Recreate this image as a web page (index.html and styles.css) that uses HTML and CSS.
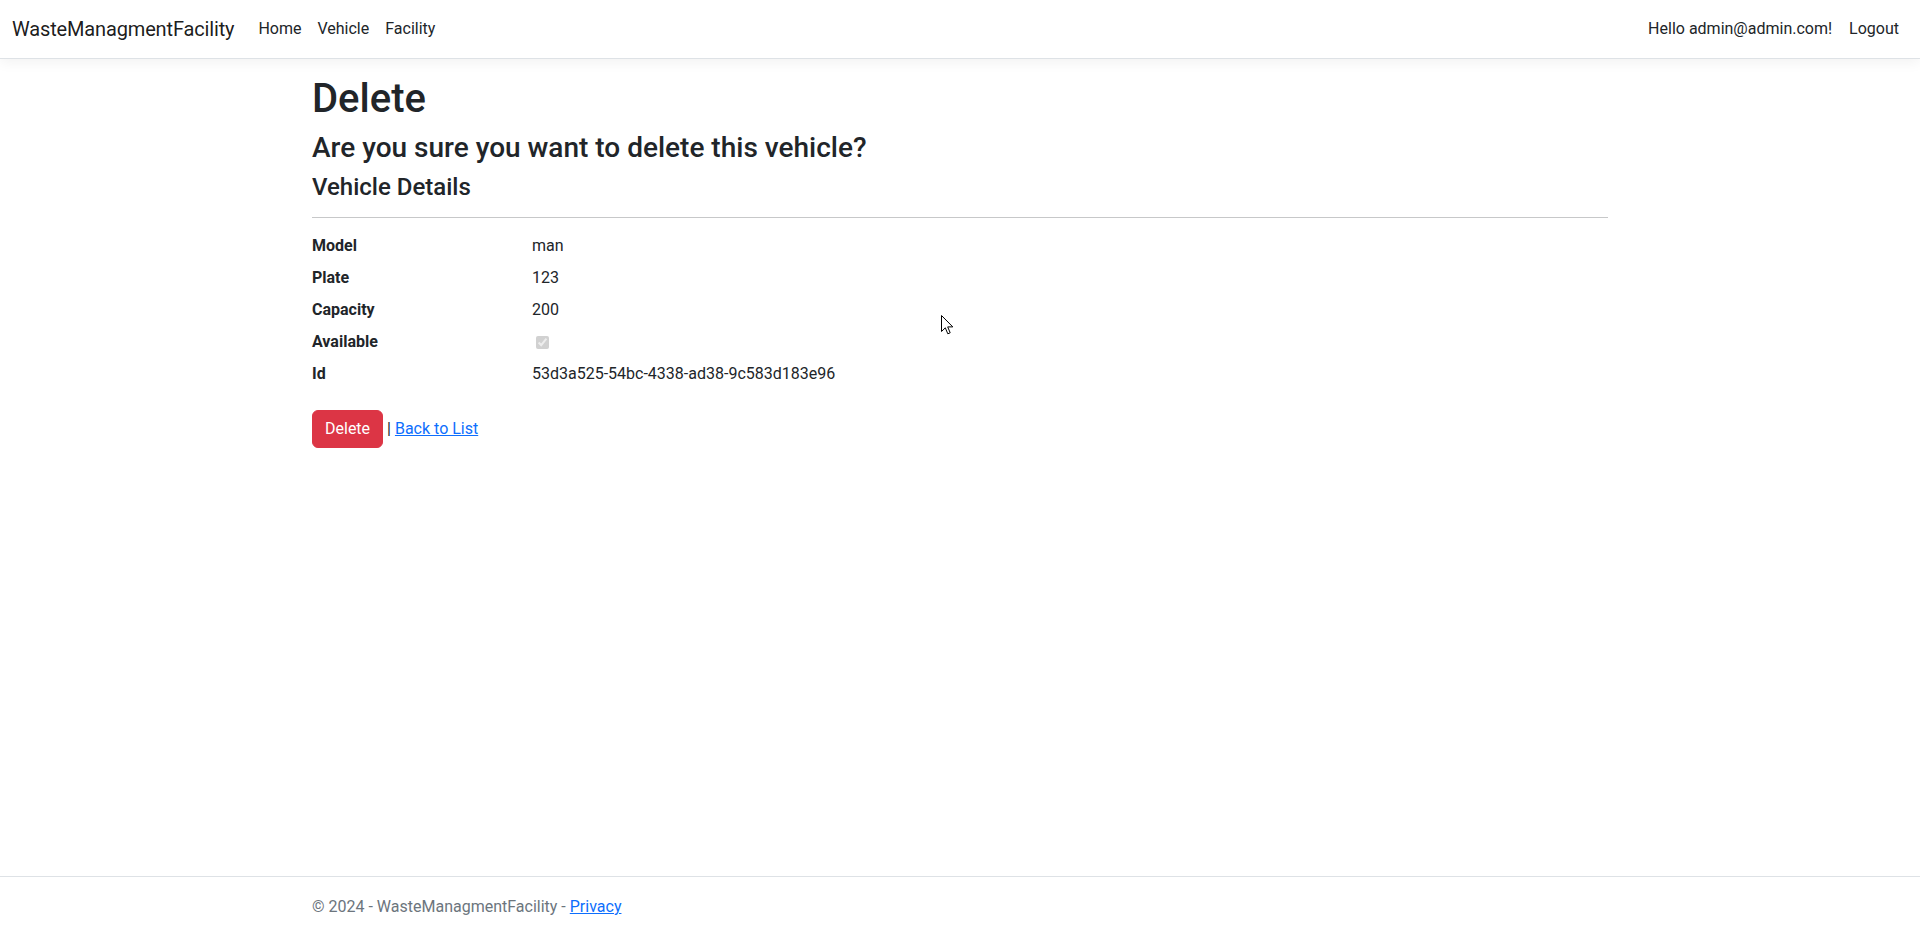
FILE: index.html
```html
<!DOCTYPE html>
<html lang="en">
<head>
<meta charset="utf-8">
<title>Delete - WasteManagmentFacility</title>
<link rel="stylesheet" href="styles.css">
</head>
<body>
<header>
  <nav class="navbar">
    <div class="navbar-inner">
      <a class="brand" href="#">WasteManagmentFacility</a>
      <ul class="nav-list">
        <li><a class="nav-link" href="#">Home</a></li>
        <li><a class="nav-link" href="#">Vehicle</a></li>
        <li><a class="nav-link" href="#">Facility</a></li>
      </ul>
      <ul class="nav-list nav-right">
        <li><a class="nav-link" href="#">Hello admin@admin.com!</a></li>
        <li><button class="nav-link nav-button" type="button">Logout</button></li>
      </ul>
    </div>
  </nav>
</header>
<div class="container main">
  <h1 class="title">Delete</h1>
  <h3 class="question">Are you sure you want to delete this vehicle?</h3>
  <div>
    <h4 class="subtitle">Vehicle Details</h4>
    <hr class="divider">
    <dl class="details">
      <dt>Model</dt><dd>man</dd>
      <dt>Plate</dt><dd>123</dd>
      <dt>Capacity</dt><dd>200</dd>
      <dt>Available</dt><dd><input class="check-box" type="checkbox" checked disabled></dd>
      <dt>Id</dt><dd>53d3a525-54bc-4338-ad38-9c583d183e96</dd>
    </dl>
    <form class="actions">
      <button type="button" class="btn-danger">Delete</button> | <a href="#" class="link">Back to List</a>
    </form>
  </div>
</div>
<footer class="footer">
  <div class="container">&copy; 2024 - WasteManagmentFacility - <a href="#" class="link">Privacy</a></div>
</footer>
<svg class="cursor" width="13" height="21" viewBox="0 0 13 21">
  <path d="M0.5 0.5 L0.5 16.5 L4.3 12.8 L6.8 18.8 L9.2 17.8 L6.7 11.9 L11.8 11.9 Z" fill="#fff" stroke="#000" stroke-width="1" stroke-linejoin="miter"/>
</svg>
</body>
</html>
```

FILE: styles.css
```css
* { box-sizing: border-box; }
html { font-size: 16px; }
body {
  margin: 0;
  min-height: 100vh;
  display: flex;
  flex-direction: column;
  font-family: "Segoe UI", Roboto, "Noto Sans", sans-serif;
  font-size: 1rem;
  line-height: 1.5;
  color: #212529;
  background: #fff;
  position: relative;
}
a { color: #0d6efd; }
.navbar {
  background: #fff;
  border-bottom: 1px solid #dee2e6;
  box-shadow: 0 .25rem .75rem rgba(0,0,0,.05);
  padding: .5rem 0;
  margin-bottom: 1rem;
}
.navbar-inner {
  display: flex;
  align-items: center;
  padding: 0 12px;
}
.brand {
  font-size: 1.25rem;
  line-height: 30px;
  padding: .3125rem 0;
  margin-right: 1rem;
  color: rgba(0,0,0,.9);
  text-decoration: none;
  white-space: nowrap;
  letter-spacing: -0.15px;
}
.nav-list {
  list-style: none;
  margin: 0;
  padding: 0;
  display: flex;
  align-items: center;
  flex-grow: 1;
}
.nav-right { flex-grow: 0; }
.nav-link {
  display: block;
  padding: .5rem;
  color: #212529;
  text-decoration: none;
  font-size: 1rem;
  line-height: 1.5;
}
.nav-button {
  background: none;
  border: 1px solid transparent;
  font-family: inherit;
  cursor: pointer;
}
.container {
  width: 100%;
  max-width: 1320px;
  margin: 0 auto;
  padding: 0 12px;
}
.main { padding-bottom: 1rem; }
.title, .question, .subtitle {
  margin: 0 0 .5rem;
  font-weight: 500;
  line-height: 1.2;
}
.title { font-size: 2.5rem; }
.question { font-size: 1.75rem; }
.subtitle { font-size: 1.5rem; }
.divider {
  margin: 1rem 0;
  border: 0;
  border-top: 1px solid #212529;
  opacity: .25;
}
.details {
  display: grid;
  grid-template-columns: 220px 1fr;
  margin: 0 0 1rem;
}
.details dt { font-weight: 700; }
.details dd { margin: 0 0 .5rem; }
.check-box { margin: 3px 3px 3px 4px; vertical-align: -2px; }
.actions { margin: 0; }
.btn-danger {
  font-family: inherit;
  font-size: 1rem;
  line-height: 1.5;
  padding: .375rem .75rem;
  color: #fff;
  background: #dc3545;
  border: 1px solid #dc3545;
  border-radius: .375rem;
  cursor: pointer;
}
.footer {
  margin-top: auto;
  border-top: 1px solid #dee2e6;
  color: #6c757d;
  line-height: 60px;
  white-space: nowrap;
}
.cursor {
  position: absolute;
  left: 941px;
  top: 315px;
}
```
